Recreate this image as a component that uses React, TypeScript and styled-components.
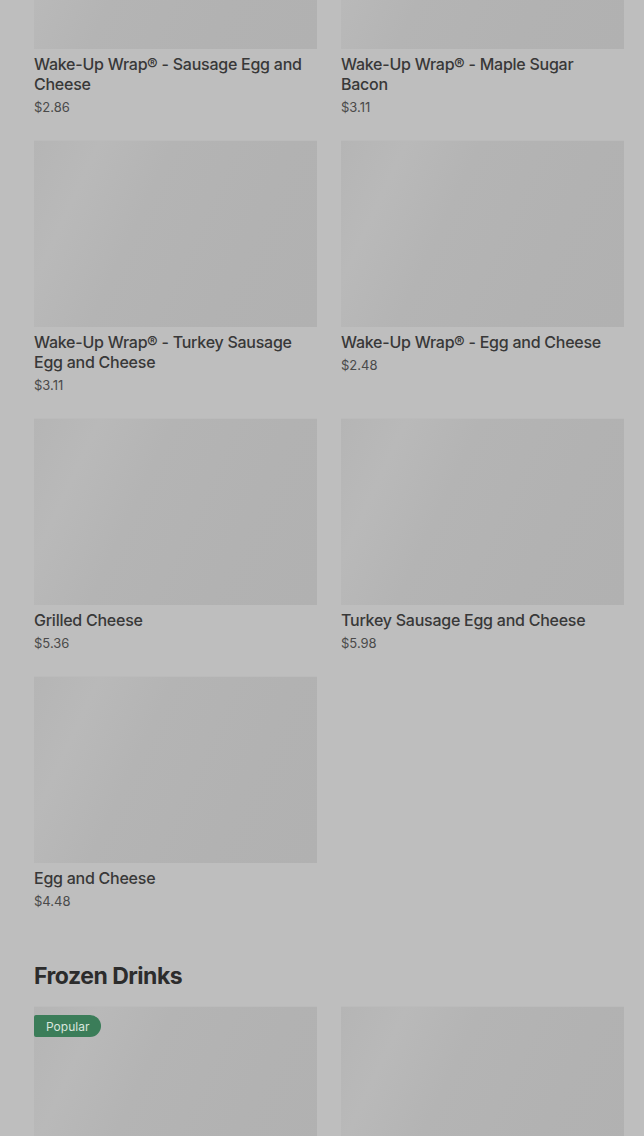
import React from "react";
import styled, { createGlobalStyle } from "styled-components";

const GlobalStyle = createGlobalStyle`
  html, body {
    margin: 0;
    padding: 0;
    background: #bebebe;
    overflow: hidden;
  }
  body {
    font-family: Inter, "Open Sans", Arial, sans-serif;
  }
`;

const Page = styled.main`
  padding: 0 20px 0 34px;
  margin-top: -138px;
  display: flex;
  flex-direction: column;
  gap: 49px;
`;

const Section = styled.section`
  display: flex;
  flex-direction: column;
  gap: 14px;
`;

const Heading = styled.h2`
  margin: 0;
  font-size: 23px;
  line-height: 32px;
  font-weight: 700;
  letter-spacing: -0.5px;
  color: #2c2c2c;
`;

const Grid = styled.div`
  display: grid;
  grid-template-columns: 283px 283px;
  column-gap: 24px;
  row-gap: 23px;
  align-items: start;
`;

const Card = styled.article`
  display: flex;
  flex-direction: column;
  position: relative;
`;

const Thumb = styled.div`
  height: 187px;
  background: linear-gradient(
    115deg,
    #b5b5b5 0%,
    #b9b9b9 18%,
    #b4b4b4 38%,
    #b2b2b2 70%,
    #b1b1b1 100%
  );
  box-shadow: inset 0 1px 0 #bbbbbb;
`;

const Badge = styled.span`
  position: absolute;
  top: 9px;
  left: 0;
  height: 22px;
  padding: 0 12px;
  display: flex;
  align-items: center;
  background: #3b7d59;
  color: #d9e6de;
  font-size: 12px;
  border-radius: 2px 11px 11px 2px;
`;

const Title = styled.h3`
  margin: 5px 0 0;
  font-size: 16px;
  line-height: 20px;
  font-weight: 500;
  color: #383838;
  letter-spacing: -0.25px;
`;

const Price = styled.p`
  margin: 3px 0 0;
  font-size: 13px;
  line-height: 20px;
  color: #4a4a4a;
`;

type Item = { name: string; price: string; popular?: boolean };

const breakfast: Item[] = [
  { name: "Wake-Up Wrap® - Sausage Egg and Cheese", price: "$2.86" },
  { name: "Wake-Up Wrap® - Maple Sugar Bacon", price: "$3.11" },
  { name: "Wake-Up Wrap® - Turkey Sausage Egg and Cheese", price: "$3.11" },
  { name: "Wake-Up Wrap® - Egg and Cheese", price: "$2.48" },
  { name: "Grilled Cheese", price: "$5.36" },
  { name: "Turkey Sausage Egg and Cheese", price: "$5.98" },
  { name: "Egg and Cheese", price: "$4.48" },
];

const frozen: Item[] = [
  { name: "", price: "", popular: true },
  { name: "", price: "" },
];

function ProductCard({ item }: { item: Item }) {
  return (
    <Card>
      <Thumb />
      {item.popular && <Badge>Popular</Badge>}
      {item.name && <Title>{item.name}</Title>}
      {item.price && <Price>{item.price}</Price>}
    </Card>
  );
}

export default function App() {
  return (
    <>
      <GlobalStyle />
      <Page>
        <Section>
          <Grid>
            {breakfast.map((it) => (
              <ProductCard key={it.name} item={it} />
            ))}
          </Grid>
        </Section>
        <Section>
          <Heading>Frozen Drinks</Heading>
          <Grid>
            {frozen.map((it, i) => (
              <ProductCard key={i} item={it} />
            ))}
          </Grid>
        </Section>
      </Page>
    </>
  );
}
